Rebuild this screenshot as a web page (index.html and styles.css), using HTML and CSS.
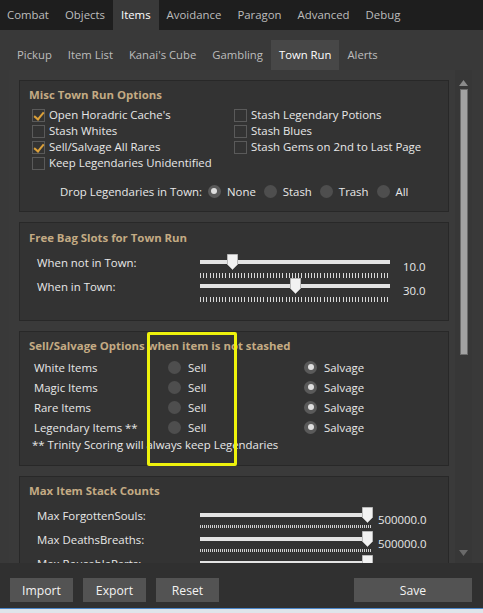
FILE: index.html
```html
<!DOCTYPE html>
<html>
<head>
<meta charset="utf-8">
<link rel="stylesheet" href="styles.css">
</head>
<body>
<div class="app">
  <nav class="tabs">
    <span class="tab">Combat</span>
    <span class="tab">Objects</span>
    <span class="tab active">Items</span>
    <span class="tab">Avoidance</span>
    <span class="tab">Paragon</span>
    <span class="tab">Advanced</span>
    <span class="tab">Debug</span>
  </nav>
  <div class="content">
    <nav class="subtabs">
      <span class="subtab">Pickup</span>
      <span class="subtab">Item List</span>
      <span class="subtab">Kanai's Cube</span>
      <span class="subtab">Gambling</span>
      <span class="subtab active">Town Run</span>
      <span class="subtab">Alerts</span>
    </nav>
    <div class="scroller">
      <div class="viewport">
        <section class="group g1">
          <h3 class="title">Misc Town Run Options</h3>
          <div class="checks">
            <label class="cb"><span class="box on"></span>Open Horadric Cache's</label>
            <label class="cb"><span class="box"></span>Stash Legendary Potions</label>
            <label class="cb"><span class="box"></span>Stash Whites</label>
            <label class="cb"><span class="box"></span>Stash Blues</label>
            <label class="cb"><span class="box on"></span>Sell/Salvage All Rares</label>
            <label class="cb"><span class="box"></span>Stash Gems on 2nd to Last Page</label>
            <label class="cb"><span class="box"></span>Keep Legendaries Unidentified</label>
          </div>
          <div class="drop">
            <span class="drop-label">Drop Legendaries in Town:</span>
            <span class="rb"><span class="radio on"></span>None</span>
            <span class="rb"><span class="radio"></span>Stash</span>
            <span class="rb"><span class="radio"></span>Trash</span>
            <span class="rb"><span class="radio"></span>All</span>
          </div>
        </section>

        <section class="group g2">
          <h3 class="title">Free Bag Slots for Town Run</h3>
          <div class="srow">
            <span class="slabel">When not in Town:</span>
            <div class="slider"><div class="track"></div><svg class="thumb" style="left:27px" width="11" height="16" viewBox="0 0 11 16"><polygon points="0.5,0.5 10.5,0.5 10.5,10.5 5.5,15.5 0.5,10.5" fill="#f2f2f2" stroke="#b8b8b8"/></svg><div class="ticks"></div></div>
            <span class="sval">10.0</span>
          </div>
          <div class="srow">
            <span class="slabel">When in Town:</span>
            <div class="slider"><div class="track"></div><svg class="thumb" style="left:90px" width="11" height="16" viewBox="0 0 11 16"><polygon points="0.5,0.5 10.5,0.5 10.5,10.5 5.5,15.5 0.5,10.5" fill="#f2f2f2" stroke="#b8b8b8"/></svg><div class="ticks"></div></div>
            <span class="sval">30.0</span>
          </div>
        </section>

        <section class="group g3">
          <h3 class="title">Sell/Salvage Options when item is not stashed</h3>
          <div class="sellgrid">
            <span class="ilabel">White Items</span>
            <span class="rb"><span class="radio"></span>Sell</span>
            <span class="rb"><span class="radio on"></span>Salvage</span>
            <span class="ilabel">Magic Items</span>
            <span class="rb"><span class="radio"></span>Sell</span>
            <span class="rb"><span class="radio on"></span>Salvage</span>
            <span class="ilabel">Rare Items</span>
            <span class="rb"><span class="radio"></span>Sell</span>
            <span class="rb"><span class="radio on"></span>Salvage</span>
            <span class="ilabel">Legendary Items **</span>
            <span class="rb"><span class="radio"></span>Sell</span>
            <span class="rb"><span class="radio on"></span>Salvage</span>
          </div>
          <p class="note">** Trinity Scoring will always keep Legendaries</p>
        </section>

        <section class="group g4">
          <h3 class="title">Max Item Stack Counts</h3>
          <div class="srow wide">
            <span class="slabel">Max ForgottenSouls:</span>
            <div class="slider short"><div class="track"></div><svg class="thumb" style="left:162px" width="11" height="16" viewBox="0 0 11 16"><polygon points="0.5,0.5 10.5,0.5 10.5,10.5 5.5,15.5 0.5,10.5" fill="#f2f2f2" stroke="#b8b8b8"/></svg><div class="ticks dense"></div></div>
            <span class="sval">500000.0</span>
          </div>
          <div class="srow wide">
            <span class="slabel">Max DeathsBreaths:</span>
            <div class="slider short"><div class="track"></div><svg class="thumb" style="left:162px" width="11" height="16" viewBox="0 0 11 16"><polygon points="0.5,0.5 10.5,0.5 10.5,10.5 5.5,15.5 0.5,10.5" fill="#f2f2f2" stroke="#b8b8b8"/></svg><div class="ticks dense"></div></div>
            <span class="sval">500000.0</span>
          </div>
          <div class="srow wide">
            <span class="slabel">Max ReusableParts:</span>
            <div class="slider short"><div class="track"></div><svg class="thumb" style="left:162px" width="11" height="16" viewBox="0 0 11 16"><polygon points="0.5,0.5 10.5,0.5 10.5,10.5 5.5,15.5 0.5,10.5" fill="#f2f2f2" stroke="#b8b8b8"/></svg><div class="ticks dense"></div></div>
            <span class="sval">500000.0</span>
          </div>
        </section>
      </div>
      <div class="scrollbar">
        <svg class="arrow" width="9" height="6" viewBox="0 0 9 6"><polygon points="4.5,0 9,6 0,6" fill="#8a8a8a"/></svg>
        <div class="thumbbar"></div>
        <div class="spacer"></div>
        <svg class="arrow" width="9" height="6" viewBox="0 0 9 6"><polygon points="0,0 9,0 4.5,6" fill="#6a6a6a"/></svg>
      </div>
    </div>
  </div>
  <footer class="footer">
    <button class="btn">Import</button>
    <button class="btn">Export</button>
    <button class="btn">Reset</button>
    <button class="btn save">Save</button>
  </footer>
  <div class="taskbar"></div>
  <div class="highlight"></div>
</div>
</body>
</html>
```

FILE: styles.css
```css
* { box-sizing: border-box; }
html, body { margin: 0; padding: 0; }
body {
  width: 483px;
  height: 613px;
  overflow: hidden;
  background: #333333;
  font-family: "Open Sans", "Noto Sans", sans-serif;
  font-size: 11.4px;
  color: #e8e8e8;
}
.app {
  position: relative;
  width: 483px;
  height: 613px;
  display: flex;
  flex-direction: column;
}
.tabs {
  height: 30px;
  background: #1e1e1e;
  display: flex;
  padding-left: 0;
}
.tab {
  height: 30px;
  line-height: 30px;
  padding: 0 8px;
  font-size: 11.4px;
  color: #bdbdbd;
}
.tab:first-child { padding-left: 7px; }
.tab.active { background: #393939; color: #ffffff; }

.content {
  background: #393939;
  padding: 10px 0 0 9px;
  height: 533px;
  display: flex;
  flex-direction: column;
}
.subtabs {
  display: flex;
  height: 30px;
}
.subtab {
  height: 30px;
  line-height: 30px;
  padding: 0 8px;
  font-size: 11.3px;
  color: #bdbdbd;
}
.subtab.active { background: #474747; color: #ffffff; }

.scroller {
  display: flex;
  height: 493px;
  width: 463px;
}
.viewport {
  width: 446px;
  height: 493px;
  overflow: hidden;
  padding: 10px 6px 0 10px;
  background: #3a3a3a;
}
.group {
  background: #333333;
  border: 1px solid #282828;
  margin: 0 0 10px 0;
  padding: 6px 10px 0 9px;
}
.title {
  margin: 0;
  font-size: 11.4px;
  line-height: 16px;
  font-weight: 700;
  color: #c4ab84;
}
.g1 { height: 132px; }
.g2 { height: 99px; padding-top: 7px; }
.g3 { height: 135px; }

.checks {
  margin-top: 4px;
  padding-left: 3px;
  display: grid;
  grid-template-columns: 202px 1fr;
  grid-auto-rows: 16px;
}
.cb {
  display: flex;
  align-items: center;
  gap: 4px;
  line-height: 16px;
  white-space: nowrap;
}
.box {
  width: 13px;
  height: 13px;
  border: 1px solid #5a5a5a;
  background: #333;
  position: relative;
  flex: none;
}
.box.on::after {
  content: "";
  position: absolute;
  left: 3px;
  top: 0px;
  width: 4px;
  height: 8px;
  border-right: 2px solid #dba03a;
  border-bottom: 2px solid #dba03a;
  transform: rotate(40deg);
}
.drop {
  margin-top: 12px;
  padding-left: 31px;
  display: flex;
  align-items: center;
  height: 16px;
  gap: 8px;
}
.drop-label { margin-right: -2px; }
.drop .rb { gap: 6px; }
.rb {
  display: inline-flex;
  align-items: center;
  gap: 7px;
  white-space: nowrap;
}
.radio {
  width: 13px;
  height: 13px;
  border-radius: 50%;
  background: #4e4e4e;
  flex: none;
  position: relative;
}
.radio.on { background: #5a5a5a; }
.radio.on::after {
  content: "";
  position: absolute;
  left: 3.5px;
  top: 3.5px;
  width: 6px;
  height: 6px;
  border-radius: 50%;
  background: #dedede;
}

.srow {
  display: grid;
  grid-template-columns: 163px 190px 1fr;
  height: 24px;
  padding-left: 8px;
}
.g2 .srow:first-of-type { margin-top: 6px; }
.g4 .srow:first-of-type { margin-top: 6px; }
.srow.wide { grid-template-columns: 163px 172px 1fr; }
.slabel { line-height: 16px; padding-top: 3px; white-space: nowrap; }
.sval { line-height: 16px; padding-top: 7px; padding-left: 13px; white-space: nowrap; }
.srow.wide .sval { padding-left: 6px; }
.slider {
  position: relative;
  height: 24px;
}
.track {
  position: absolute;
  left: 0;
  right: 0;
  top: 8px;
  height: 4px;
  background: #e4e4e4;
}
.thumb {
  position: absolute;
  top: 2px;
}
.ticks {
  position: absolute;
  left: 0;
  right: 0;
  top: 21px;
  height: 5px;
  background: repeating-linear-gradient(to right, #d8d8d8 0, #d8d8d8 1px, transparent 1px, transparent 3.1667px);
}
.ticks.dense {
  top: 20px;
  height: 3px;
  background: repeating-linear-gradient(to right, #cfcfcf 0, #cfcfcf 1px, transparent 1px, transparent 2px);
}

.sellgrid {
  margin-top: 3px;
  padding-left: 5px;
  display: grid;
  grid-template-columns: 134px 136px 1fr;
  grid-auto-rows: 20px;
  align-items: center;
}
.note {
  margin: 0;
  line-height: 16px;
  padding-left: 3px;
}

.scrollbar {
  width: 17px;
  height: 493px;
  background: #373737;
  display: flex;
  flex-direction: column;
  align-items: center;
  padding: 10px 0 7px;
}
.thumbbar {
  margin-top: 3px;
  width: 8px;
  height: 266px;
  background: #a2a2a2;
  border: 1px solid #6c6c6c;
}
.spacer { flex: 1; }

.footer {
  height: 45px;
  background: #303030;
  display: flex;
  padding: 15px 11px 0 10px;
  gap: 10px;
  align-items: flex-start;
}
.btn {
  width: 63px;
  height: 24px;
  background: #535353;
  border: none;
  color: #f2f2f2;
  font-family: "Open Sans", "Noto Sans", sans-serif;
  font-size: 12.2px;
  padding: 0;
}
.btn.save { width: 118px; margin-left: auto; }
.taskbar {
  height: 5px;
  background: #dfe4ea;
  border-top: 1px solid #4b86c9;
}
.highlight {
  position: absolute;
  left: 147px;
  top: 332px;
  width: 90px;
  height: 134px;
  border: 3px solid #eef20c;
  border-radius: 2px;
}
```
